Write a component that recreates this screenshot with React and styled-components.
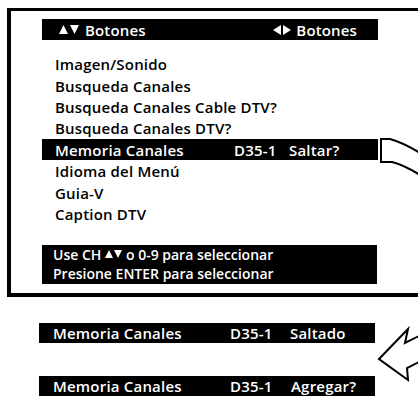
import React from "react";
import styled, { createGlobalStyle } from "styled-components";

const Global = createGlobalStyle`
  html, body { margin: 0; padding: 0; background: #fff; }
  body { font-family: "Open Sans", "Noto Sans", "DejaVu Sans", sans-serif; }
  * { box-sizing: border-box; }
`;

const Page = styled.div`
  width: 418px;
  height: 396px;
  overflow: hidden;
  padding-top: 8px;
  background: #fff;
`;

const Frame = styled.div`
  margin-left: 7px;
  width: 411px;
  border-top: 3px solid #000;
  border-left: 4px solid #000;
  border-bottom: 4px solid #000;
  padding: 8px 0 9px 31px;
`;

const Header = styled.div`
  width: 336px;
  height: 21px;
  background: #000;
  color: #fff;
  display: flex;
  align-items: center;
  justify-content: space-between;
  padding: 0 21px 0 17px;
  font-size: 15px;
  font-weight: 600;
  letter-spacing: 0.15px;
`;

const Label = styled.span`
  display: inline-flex;
  align-items: center;
`;

const Icons = styled.span`
  display: inline-flex;
  align-items: center;
  gap: ${(p) => p.$gap ?? 2}px;
  margin-right: ${(p) => p.$mr ?? 6}px;
`;

const TriSvg = styled.svg`
  display: block;
  flex: none;
`;

function Tri({ dir, w = 9, h = 9 }) {
  const pts = {
    up: `0,${h} ${w / 2},0 ${w},${h}`,
    down: `0,0 ${w},0 ${w / 2},${h}`,
    left: `${w},0 ${w},${h} 0,${h / 2}`,
    right: `0,0 ${w},${h / 2} 0,${h}`,
  }[dir];
  return (
    <TriSvg width={w} height={h} viewBox={`0 0 ${w} ${h}`}>
      <polygon points={pts} fill="currentColor" />
    </TriSvg>
  );
}

const Menu = styled.div`
  margin-top: 13.5px;
  display: flex;
  flex-direction: column;
`;

const Row = styled.div`
  display: flex;
  align-items: center;
  height: 21.4px;
`;

const Entry = styled.div`
  width: 336px;
  height: ${(p) => p.$h || "100%"};
  display: grid;
  grid-template-columns: ${(p) => p.$name}px ${(p) => p.$code}px auto;
  align-items: center;
  padding-left: ${(p) => p.$pad}px;
  background: ${(p) => (p.$on ? "#000" : "transparent")};
  color: ${(p) => (p.$on ? "#fff" : "#000")};
  font-size: 15px;
  font-weight: 600;
  letter-spacing: 0.2px;
  white-space: nowrap;
`;

const Curve = styled.svg`
  display: block;
  width: 40px;
  height: 21px;
  overflow: visible;
  flex: none;
`;

const Info = styled.div`
  margin-top: 20.3px;
  width: 335px;
  height: 39px;
  background: #000;
  color: #fff;
  padding: 0 0 0 11px;
  font-size: 14px;
  font-weight: 600;
  line-height: 19px;
`;

const InfoLine = styled.div`
  display: flex;
  align-items: center;
  height: 19px;
  white-space: pre;
`;

const Lower = styled.div`
  margin-top: 26px;
  margin-left: 39px;
  display: flex;
  align-items: flex-start;
`;

const Bars = styled.div`
  display: flex;
  flex-direction: column;
  gap: 33px;
`;

const Pointer = styled.svg`
  display: block;
  width: 43px;
  height: 73px;
  overflow: visible;
  flex: none;
`;

const items = [
  "Imagen/Sonido",
  "Busqueda Canales",
  "Busqueda Canales Cable DTV?",
  "Busqueda Canales DTV?",
  "Memoria Canales",
  "Idioma del Menú",
  "Guia-V",
  "Caption DTV",
];

export default function App() {
  return (
    <Page>
      <Global />
      <Frame>
        <Header>
          <Label>
            <Icons $gap={2} $mr={6}>
              <Tri dir="up" w={9} h={9} />
              <Tri dir="down" w={9} h={9} />
            </Icons>
            Botones
          </Label>
          <Label>
            <Icons $gap={2} $mr={5}>
              <Tri dir="left" w={8} h={10} />
              <Tri dir="right" w={8} h={10} />
            </Icons>
            Botones
          </Label>
        </Header>
        <Menu>
          {items.map((t) => {
            const on = t === "Memoria Canales";
            return (
              <Row key={t}>
                <Entry $pad={13} $name={179} $code={55} $on={on}>
                  <span>{t}</span>
                  {on && <span>D35-1</span>}
                  {on && <span>Saltar?</span>}
                </Entry>
                {on && (
                  <Curve viewBox="0 0 40 21">
                    <path
                      d="M3,0 L12,0 Q26,4 42,14 L42,36 Q26,26 14,23 L3,23 Z"
                      fill="#fff"
                      stroke="#000"
                      strokeWidth="2"
                      strokeLinejoin="miter"
                    />
                  </Curve>
                )}
              </Row>
            );
          })}
        </Menu>
        <Info>
          <InfoLine>
            {"Use CH "}
            <Icons $gap={1} $mr={4}>
              <Tri dir="up" w={8} h={8} />
              <Tri dir="down" w={8} h={8} />
            </Icons>
            {"o 0-9 para seleccionar"}
          </InfoLine>
          <InfoLine>Presione ENTER para seleccionar</InfoLine>
        </Info>
      </Frame>
      <Lower>
        <Bars>
          <Entry $pad={14} $name={177} $code={60} $on $h="20px">
            <span>Memoria Canales</span>
            <span>D35-1</span>
            <span>Saltado</span>
          </Entry>
          <Entry $pad={14} $name={177} $code={61} $on $h="20px">
            <span>Memoria Canales</span>
            <span>D35-1</span>
            <span>Agregar?</span>
          </Entry>
        </Bars>
        <Pointer viewBox="0 0 43 73">
          <path
            d="M4,36 L33,6 L30,20 L46,12 L46,38 L32,45 L33,57 Z"
            fill="#fff"
            stroke="#000"
            strokeWidth="2"
            strokeLinejoin="miter"
          />
        </Pointer>
      </Lower>
    </Page>
  );
}
